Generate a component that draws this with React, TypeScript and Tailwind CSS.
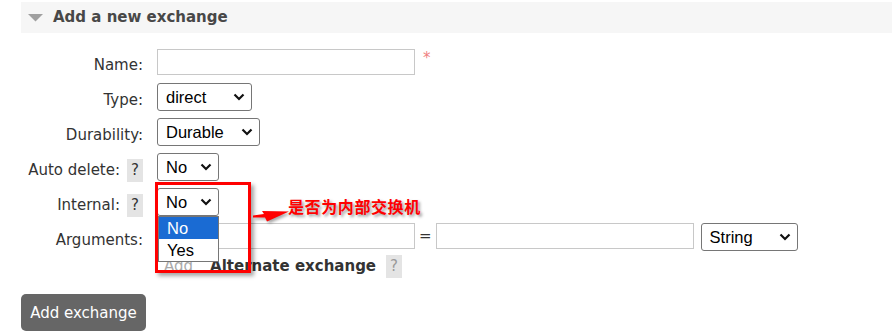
import type { ReactNode } from "react";

const Chevron = () => (
  <svg width="12" height="8" viewBox="0 0 12 8" className="shrink-0">
    <path d="M1.5 1.5 L6 6 L10.5 1.5" fill="none" stroke="#111" strokeWidth="2.2" />
  </svg>
);

type SelectProps = { value: string; width: string; children?: ReactNode };

const FakeSelect = ({ value, width, children }: SelectProps) => (
  <div className={`relative h-[28px] ${width}`}>
    <div className="h-full flex items-center justify-between pl-[8px] pr-[6px] border border-[#767676] rounded-[3px] bg-white font-['Liberation_Sans',Arial,sans-serif] text-[16.5px] text-black">
      <span>{value}</span>
      <Chevron />
    </div>
    {children}
  </div>
);

const Help = ({ faded }: { faded?: boolean }) => (
  <span
    className={`inline-block h-[23px] leading-[23px] px-[4px] bg-[#e4e4e4] ${faded ? "text-[#999]" : "text-[#333]"}`}
  >
    ?
  </span>
);

const Label = ({ text, help }: { text: string; help?: boolean }) => (
  <div className="flex justify-end items-start gap-[7px] pt-[6px] leading-[23px] whitespace-nowrap">
    <span>{text}</span>
    {help && <Help />}
  </div>
);

const TextBox = () => (
  <div className="w-[258px] h-[26px] border border-[#c8c8c8] bg-white" />
);

export default function App() {
  return (
    <div className="relative w-[892px] h-[335px] overflow-hidden bg-white text-[15px] text-[#333] font-['DejaVu_Sans',Verdana,sans-serif]">
      {/* 見出し */}
      <div className="ml-[21px] mt-[2px] h-[31px] bg-[#f6f6f6] flex items-center">
        <svg width="15" height="8" viewBox="0 0 15 8" className="ml-[7px]">
          <path d="M0 0 H15 L7.5 7.5 Z" fill="#a0a0a0" />
        </svg>
        <span className="ml-[10px] font-bold text-[#484848] leading-[20px] -mt-[1px]">
          Add a new exchange
        </span>
      </div>

      {/* フォーム */}
      <div className="mt-[15px] grid grid-cols-[143px_auto] auto-rows-[28px] gap-x-[14px] gap-y-[7px]">
        <Label text="Name:" />
        <div className="flex items-start pt-[1px]">
          <TextBox />
          <span className="ml-[8px] -mt-[2px] text-[#f08080] leading-[23px]">*</span>
        </div>

        <Label text="Type:" />
        <div>
          <FakeSelect value="direct" width="w-[95px]" />
        </div>

        <Label text="Durability:" />
        <div>
          <FakeSelect value="Durable" width="w-[103px]" />
        </div>

        <Label text="Auto delete:" help />
        <div>
          <FakeSelect value="No" width="w-[62px]" />
        </div>

        <Label text="Internal:" help />
        <div className="relative z-20">
          <FakeSelect value="No" width="w-[62px]">
            {/* 開いたドロップダウン */}
            <div className="absolute top-[28px] left-[1px] w-[61px] border border-[#767676] bg-white font-['Liberation_Sans',Arial,sans-serif] text-[16.5px]">
              <div className="h-[22px] leading-[22px] pl-[8px] bg-[#1a6bd3] text-white">No</div>
              <div className="h-[22px] leading-[22px] pl-[8px] text-black">Yes</div>
            </div>
          </FakeSelect>
        </div>

        <Label text="Arguments:" />
        <div className="flex items-start">
          <TextBox />
          <span className="mx-[4px] leading-[26px]">=</span>
          <TextBox />
          <div className="ml-[7px]">
            <FakeSelect value="String" width="w-[97px]" />
          </div>
        </div>
      </div>

      <div className="mt-[4px] ml-[157px] flex items-start leading-[23px] h-[23px]">
        <span className="ml-[7px] text-[#aaa]">Add</span>
        <span className="ml-[17px] font-bold">Alternate exchange</span>
        <span className="ml-[10px]">
          <Help faded />
        </span>
      </div>

      <button className="mt-[16px] ml-[21px] h-[37px] w-[125px] rounded-[5px] bg-[#666] text-white text-[15px] leading-[20px]">
        Add exchange
      </button>

      {/* 注釈 */}
      <div className="absolute z-30 left-[155px] top-[182px] w-[96px] h-[91px] border-[3px] border-[#ff0000] shadow-[3px_3px_4px_rgba(0,0,0,0.35)]" />
      <svg
        className="absolute z-30 left-[250px] top-[204px]"
        width="42"
        height="22"
        viewBox="0 0 42 22"
        style={{ filter: "drop-shadow(2px 2px 1.5px rgba(0,0,0,0.35))" }}
      >
        <polygon points="3,11.5 14,10 12,7 39,7.5 17,17.5 15,13.5 3,13.5" fill="#ff0000" />
      </svg>
      <div className="absolute z-30 left-[288px] top-[196px] leading-[20px] text-[16px] tracking-[0.6px] font-bold text-[#ff0000] font-['Noto_Sans_CJK_SC',sans-serif] [text-shadow:2px_2px_3px_rgba(0,0,0,0.4)]">
        是否为内部交换机
      </div>
    </div>
  );
}
